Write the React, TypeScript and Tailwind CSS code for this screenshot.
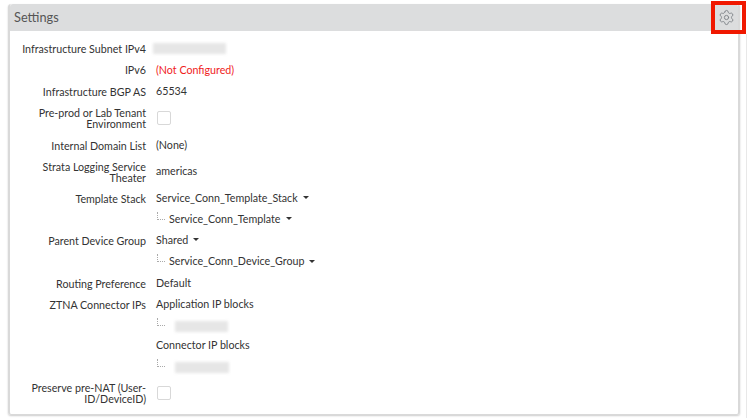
import React from 'react';
import { Settings } from 'lucide-react';

const Caret = () => <span className="ml-[5px] inline-block align-middle border-x-[3px] border-t-[3px] border-x-transparent border-t-[#333]"></span>;

const Elbow = () => <span className="inline-block w-[8px] h-[8px] ml-px mr-[4px] -translate-y-[3px] border-l border-b border-dotted border-[#aaa]"></span>;

const Row = ({ label, h = 21, children }: { label: React.ReactNode; h?: number; children?: React.ReactNode }) => (
  <div className="flex items-center" style={{ height: h }}>
    <div className="w-[136px] shrink-0 text-right leading-[11px]">{label}</div>
    <div className="ml-[10px] flex items-center">{children}</div>
  </div>
);

const Blur = ({ w }: { w: number }) => <div className="h-[11px] bg-[#e6e6e6] blur-[1.5px]" style={{ width: w }}></div>;

const Check = () => <div className="w-[14px] h-[14px] ml-px rounded-[2px] border border-[#d8d8d8] bg-white"></div>;

export default function App() {
  return (
    <div className="relative w-[750px] h-[418px] bg-white overflow-hidden pt-[4px] pl-[8px] font-['Lato',sans-serif] text-[10.7px] text-[#333]">
      <div className="relative w-[732px] h-[411px] rounded-[3px] border-l-2 border-r-2 border-b border-[#d9d9d9] shadow-[0_1px_2px_#ccc]">
        <div className="flex items-center h-[27px] bg-[#dcddde] rounded-t-[3px] pl-[4px] text-[12.75px] text-[#555]">Settings</div>
        <div className="absolute top-[-3px] right-[-8px] w-[35px] h-[33px] pr-[4px] flex items-center justify-center border-[4px] border-[#f01800]">
          <Settings size={17} strokeWidth={1.3} color="#7d8287" />
        </div>
        <div className="pt-[7px]">
          <Row label="Infrastructure Subnet IPv4"><div className="-ml-[3px]"><Blur w={73} /></div></Row>
          <Row label="IPv6" h={21.5}><span className="text-[#f01c1c]">(Not Configured)</span></Row>
          <Row label="Infrastructure BGP AS">65534</Row>
          <Row label={<>Pre-prod or Lab Tenant<br />Environment</>} h={33}><Check /></Row>
          <Row label="Internal Domain List">(None)</Row>
          <Row label={<>Strata Logging Service<br />Theater</>} h={32}>americas</Row>
          <Row label="Template Stack">Service_Conn_Template_Stack<Caret /></Row>
          <Row label=""><Elbow />Service_Conn_Template<Caret /></Row>
          <Row label="Parent Device Group">Shared<Caret /></Row>
          <Row label="" h={22}><Elbow />Service_Conn_Device_Group<Caret /></Row>
          <Row label="Routing Preference">Default</Row>
          <Row label="ZTNA Connector IPs">Application IP blocks</Row>
          <Row label="" h={20}><Elbow /><div className="ml-[6px] mt-[4px]"><Blur w={53} /></div></Row>
          <Row label="">Connector IP blocks</Row>
          <Row label="" h={20}><Elbow /><div className="ml-[6px] mt-[3px]"><Blur w={54} /></div></Row>
          <Row label={<>Preserve pre-NAT (User-<br />ID/DeviceID)</>} h={34}><Check /></Row>
        </div>
      </div>
      <div className="absolute top-[34px] left-[746px] bottom-0 w-px bg-[#e8e8e8]"></div>
    </div>
  );
}
